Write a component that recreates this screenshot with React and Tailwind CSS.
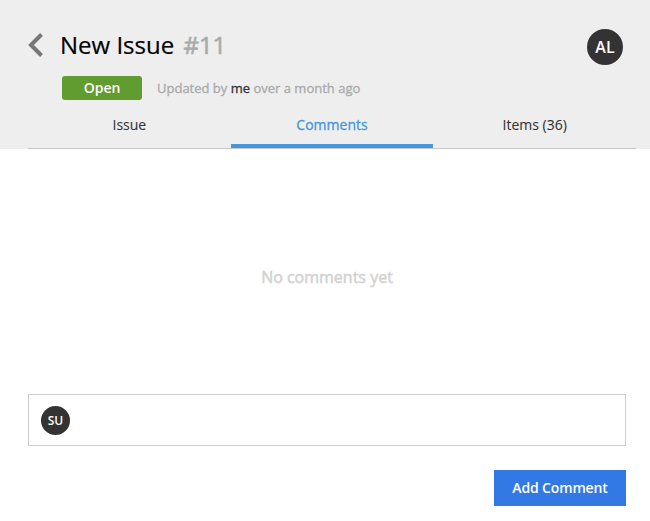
const tabs = [
  { label: "Issue" },
  { label: "Comments", active: true },
  { label: "Items (36)" },
];

export default function App() {
  return (
    <div className="flex h-[521px] w-[650px] flex-col overflow-hidden bg-white font-['Open_Sans',sans-serif] text-[#333]">
      <header className="h-[149px] bg-[#eeeeee] pl-7 pr-[14px]">
        <div className="flex h-[76px] items-start pt-[29px]">
          <svg className="mt-[4px] h-6 w-4 shrink-0" viewBox="0 0 16 24" fill="none" stroke="#777" strokeWidth="4">
            <path d="M13.5 1.5 L3 12 L13.5 22.5" />
          </svg>
          <h1 className="ml-4 whitespace-pre text-2xl leading-8 text-black [-webkit-text-stroke:0.2px]">
            New Issue <span className="ml-[3px] text-[#aaa] [-webkit-text-stroke:0.6px]">#11</span>
          </h1>
          <div className="ml-auto mr-[13px] flex size-9 items-center justify-center rounded-full bg-[#333] text-base font-semibold text-white">
            AL
          </div>
        </div>
        <div className="flex h-6 items-center pl-[34px]">
          <span className="flex h-6 w-20 items-center justify-center rounded-[3px] bg-[#609c2f] text-sm font-semibold text-white">Open</span>
          <p className="ml-[15px] pt-0.5 text-[13px] text-[#aaa] [-webkit-text-stroke:0.3px]">
            Updated by <span className="text-[#333]">me</span> over a month ago
          </p>
        </div>
        <nav className="flex h-[49px] border-b border-[#c8c8c8]">
          {tabs.map((t) => (
            <button
              key={t.label}
              className={
                t.active
                  ? "flex-1 border-b-4 border-[#4696dd] pt-[6px] text-sm text-[#4696dd] [-webkit-text-stroke:0.3px]"
                  : "flex-1 border-b-4 border-transparent pt-[6px] text-sm [-webkit-text-stroke:0.1px]"
              }
            >
              {t.label}
            </button>
          ))}
        </nav>
      </header>
      <main className="flex flex-1 flex-col pl-7 pr-6">
        <p className="flex h-[245px] items-center justify-center pt-[11px] text-base text-[#d2d2d2] [-webkit-text-stroke:0.5px]">No comments yet</p>
        <div className="flex h-[52px] items-center border border-[#ccc] pl-3 pt-px">
          <div className="flex size-[29px] items-center justify-center rounded-full bg-[#333] text-xs font-semibold text-white">SU</div>
        </div>
        <button className="mt-6 h-9 w-[132px] self-end bg-[#3279e6] text-sm font-semibold tracking-[-0.15px] text-white">Add Comment</button>
      </main>
    </div>
  );
}
